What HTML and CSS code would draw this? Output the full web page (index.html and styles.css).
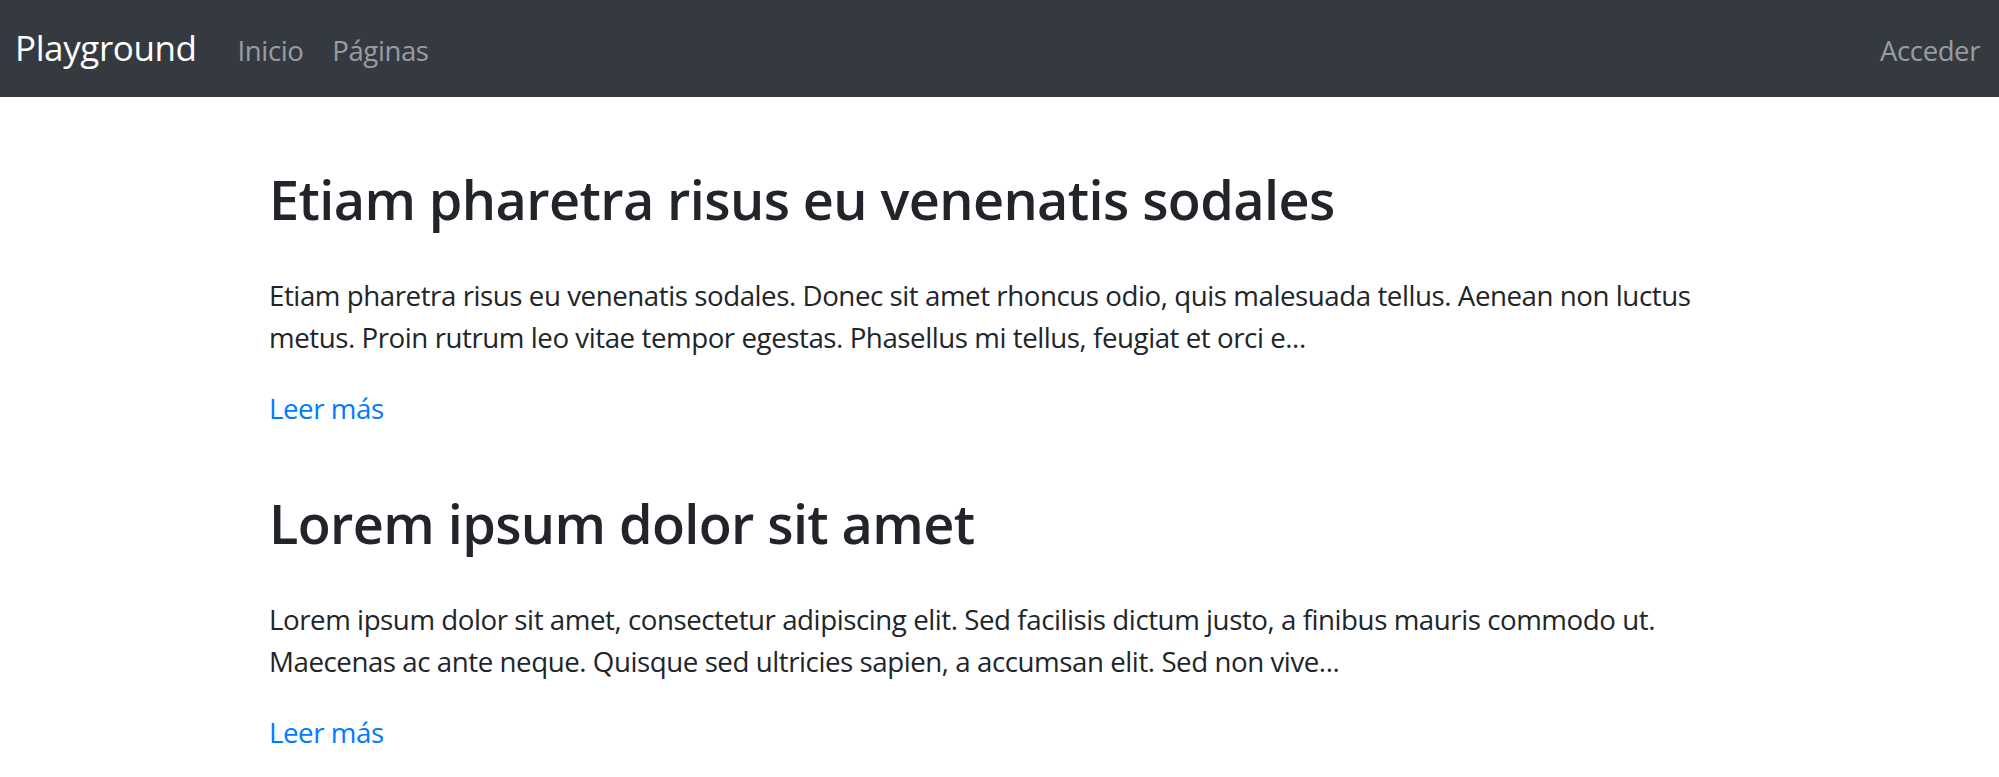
FILE: index.html
```html
<!DOCTYPE html>
<html lang="es">
<head>
<meta charset="utf-8">
<title>Playground</title>
<link rel="stylesheet" href="styles.css">
</head>
<body>
<nav class="navbar">
  <a class="brand" href="#">Playground</a>
  <ul class="nav">
    <li><a class="nav-link" href="#">Inicio</a></li>
    <li><a class="nav-link" href="#">Páginas</a></li>
  </ul>
  <ul class="nav nav-right">
    <li><a class="nav-link" href="#">Acceder</a></li>
  </ul>
</nav>
<main class="container">
  <article class="post">
    <h2 class="post-title">Etiam pharetra risus eu venenatis sodales</h2>
    <p class="post-text">Etiam pharetra risus eu venenatis sodales. Donec sit amet rhoncus odio, quis malesuada tellus. Aenean non luctus metus. Proin rutrum leo vitae tempor egestas. Phasellus mi tellus, feugiat et orci e...</p>
    <a class="more" href="#">Leer más</a>
  </article>
  <article class="post">
    <h2 class="post-title">Lorem ipsum dolor sit amet</h2>
    <p class="post-text">Lorem ipsum dolor sit amet, consectetur adipiscing elit. Sed facilisis dictum justo, a finibus mauris commodo ut. Maecenas ac ante neque. Quisque sed ultricies sapien, a accumsan elit. Sed non vive...</p>
    <a class="more" href="#">Leer más</a>
  </article>
</main>
</body>
</html>
```
FILE: styles.css
```css
* { box-sizing: border-box; }
html, body { margin: 0; padding: 0; }
body {
  font-family: "Open Sans", "Noto Sans", sans-serif;
  color: #212529;
  background: #fff;
}
a { text-decoration: none; }

.navbar {
  display: flex;
  align-items: baseline;
  height: 97px;
  padding: 21px 19px 0 15px;
  background: #343a40;
}
.brand {
  color: #fff;
  font-size: 35px;
  line-height: 54px;
  letter-spacing: -0.4px;
  margin-right: 41px;
}
.nav {
  display: flex;
  list-style: none;
  margin: 0;
  padding: 0;
  gap: 29px;
}
.nav-right { margin-left: auto; }
.nav-link {
  color: rgba(255, 255, 255, 0.5);
  font-size: 27.5px;
  line-height: 42px;
  letter-spacing: -0.4px;
}

.container {
  width: 1461px;
  margin: 0 auto;
  padding-top: 68px;
  display: flex;
  flex-direction: column;
  gap: 60px;
}
.post { display: flex; flex-direction: column; align-items: flex-start; }
.post-title {
  font-size: 54px;
  font-weight: 600;
  line-height: 68px;
  letter-spacing: -0.6px;
  margin: 0 0 41px;
}
.post-text {
  font-size: 27.7px;
  line-height: 42px;
  letter-spacing: -0.45px;
  margin: 0 0 29px;
}
.more {
  color: #007bff;
  font-size: 27.7px;
  line-height: 42px;
  letter-spacing: -0.45px;
}
```
